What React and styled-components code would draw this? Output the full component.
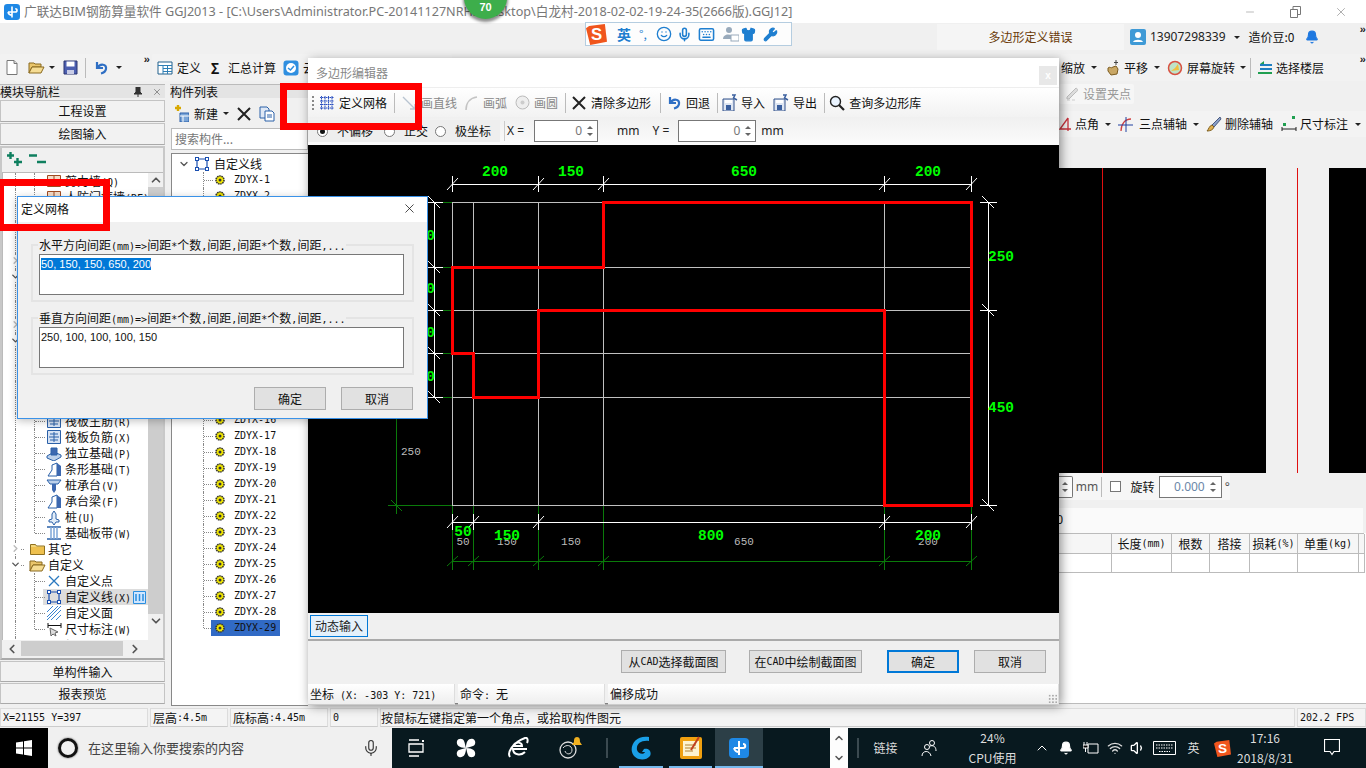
import React from 'react';
import styled, { createGlobalStyle, css } from 'styled-components';
import { Mic, Keyboard, Shirt, Wrench, Bell, X, Minus, ChevronUp, ChevronDown, ChevronLeft, ChevronRight, Volume1, Wifi, Smile } from 'lucide-react';

const Global = createGlobalStyle`
  html, body { margin: 0; padding: 0; background: #f0f0f0; }
  body { font: 12px/16px "Noto Sans CJK SC", "Liberation Sans", sans-serif; color: #111; }
  * { box-sizing: border-box; }
`;

const LatRun = styled.span`font: 10px/16px "DejaVu Sans Mono", "Liberation Mono", monospace;`;
function Mix({ children }) {
  return String(children).split(/([\x20-\x7e]+)/).map((p, i) =>
    /[\x20-\x7e]/.test(p) ? <LatRun key={i}>{p}</LatRun> : p);
}

/* ---------- icons ---------- */
const S = ({ w = 16, h = 16, children, vb }) => <svg width={w} height={h} viewBox={vb || `0 0 ${w} ${h}`} style={{ flex: 'none', display: 'block' }}>{children}</svg>;
const NewFile = () => <S w={12} h={15}><path d="M1 .5h7l3 3v11H1z" fill="#fff" stroke="#777"/><path d="M8 .5v3h3" fill="#ddd" stroke="#777"/></S>;
const OpenFolder = () => <S w={17} h={15} ><path d="M1 3h5l1 1h6v3H4L1 13z" fill="#e9c56b" stroke="#8a6a20"/><path d="M1 13l3-6h12l-3 6z" fill="#f5dc93" stroke="#8a6a20"/></S>;
const SaveIc = () => <S w={15} h={15}><path d="M1 1h13v13H1z" fill="#4c5fb0" stroke="#2a3470"/><path d="M3.500 1.500h8v5h-8z" fill="#fff"/><path d="M4 10h7v4H4z" fill="#c9cde6"/></S>;
const UndoIc = () => <S w={14} h={15}><path d="M3 2v6h6M3.500 8C6 3 13 4 12 9c-.5 2.500-3 4-5 4.500" fill="none" stroke="#2f6fc4" strokeWidth="2.200"/></S>;
const DefIc = () => <S><path d="M1 2h14v12H1z" fill="#fff" stroke="#22608c"/><path d="M1 5.500h14M6 5.500V14M10.500 5.500V14M6 8.500h9M6 11.500h9" stroke="#2f7fb5"/></S>;
const CloudIc = () => <S><rect x=".5" y=".5" width="15" height="15" rx="3" fill="#2f8fe0"/><circle cx="8" cy="8" r="5" fill="#fff"/><path d="M5 8l2.500 2L11 6" fill="none" stroke="#2f8fe0" strokeWidth="1.500"/></S>;
const Caret = styled.span`
  display: block; flex: none; width: 0; height: 0; margin-left: ${p => p.$ml ?? 0}px;
  border-left: 3px solid transparent; border-right: 3px solid transparent; border-top: 3px solid #222;
`;
const More = styled.span`font: bold 11px/11px "Liberation Mono", monospace; letter-spacing: -1px; color: #222;`;
const PlusIc = () => <S w={16} h={14}><path d="M3.500 0v7M0 3.500h7M10.500 6v8M7 10h8" stroke="#0f7f5f" strokeWidth="2.400"/></S>;
const MinusIc = () => <S w={17} h={14}><path d="M0 3.500h8M8 10h9" stroke="#0f7f5f" strokeWidth="2.400"/></S>;
const NewIc = () => <S w={14} h={17}><path d="M3 0v6M0 3h6" stroke="#d8a800" strokeWidth="2.400"/><path d="M5 8h9v9H5z" fill="#7aa5d8" stroke="#2a5fa8"/><path d="M5 11h9M8 11v6" stroke="#fff"/></S>;
const XIc = ({ c = '#222', s = 14 }) => <S w={s} h={s}><path d={`M1 1L${s - 1} ${s - 1}M${s - 1} 1L1 ${s - 1}`} stroke={c} strokeWidth="2"/></S>;
const CopyIc = () => <S><path d="M1 1h7l2 2v9H1z" fill="#dfe8f5" stroke="#2a60a8"/><path d="M6 5h7l2 2v8H6z" fill="#fff" stroke="#2a60a8"/><path d="M8 9h5M8 11h5" stroke="#2a60a8"/></S>;
const LineBox = ({ c = '#1a4fb0', w = 14 }) => <S w={w} h={w}><path d={`M2 2h${w - 4}v${w - 4}H2z`} fill="none" stroke={c} strokeWidth="1.200"/>{[[2, 2], [w - 2, 2], [2, w - 2], [w - 2, w - 2]].map(([x, y], i) => <rect key={i} x={x - 1.500} y={y - 1.500} width="3" height="3" fill="#fff" stroke={c}/>)}</S>;
const GearIc = () => <S w={10} h={10}><circle cx="5" cy="5" r="4" fill="#f4ea00" stroke="#333" strokeDasharray="1.500 .7" strokeWidth="1.600"/><circle cx="5" cy="5" r="1.500" fill="#333"/></S>;
const ClosedFolder = () => <S w={15} h={12}><path d="M.5 1.500h5l1 1.500h8v8.500H.5z" fill="#f3d67a" stroke="#8f7020"/><path d="M1 4h13v7H1z" fill="#eec04e"/></S>;
const BaseIc = ({ kind }) => {
  const b = '#2a60a8';
  if (kind === 'slab') return <S w={14} h={14}><path d="M.5.500h13v13H.5z" fill="#d7e3f4" stroke={b}/><path d="M7 2v10M2 7h10M3 4h8M3 10h8" stroke={b}/></S>;
  if (kind === 'iso') return <S w={16} h={15}><path d="M1 10l7-4 7 3v2l-7 4-7-3z" fill="#bcd0ea" stroke={b}/><path d="M5 2h6v7H5z" fill="#3c68b0" stroke={b}/></S>;
  if (kind === 'strip') return <S w={15} h={15}><path d="M1 14l4-6V3l5-2v13z" fill="#fff" stroke={b}/><path d="M10 1l4 3v10h-4z" fill="#3c68b0"/></S>;
  if (kind === 'cap') return <S w={16} h={15}><path d="M1 2h14l-3 4H4z" fill="#bcd0ea" stroke={b}/><path d="M6 6h4v6l-2 3-2-3z" fill="#3c68b0"/></S>;
  if (kind === 'pile') return <S w={12} h={15}><path d="M6 1l2 3v5l3 1v2H8l-2 3-2-3H1v-2l3-1V4z" fill="#e3edf8" stroke={b}/></S>;
  if (kind === 'band') return <S w={14} h={14}><path d="M0 1h14M0 13h14" stroke={b} strokeWidth="1.500"/><path d="M4 1v12M10 1v12M7 1v12" stroke="#7fa6d8" strokeWidth="1.500"/></S>;
  if (kind === 'point') return <S w={12} h={12}><path d="M1 1l10 10M11 1L1 11" stroke="#2a78c0" strokeWidth="1.300"/></S>;
  if (kind === 'area') return <S w={14} h={14}><path d="M0 6L6 0M0 11L11 0M0 14L14 0M4 14L14 4M9 14l5-5" stroke="#3a84d0"/></S>;
  if (kind === 'dim') return <S w={15} h={15}><path d="M1 1v5M14 1v5M1 3.500h13" stroke="#111"/><path d="M3 6l1 8 2-2 3 2-1-3 3-1z" fill="#ddd" stroke="#666"/></S>;
  if (kind === 'wall') return <S w={14} h={12}><path d="M.5.500h13v11H.5z" fill="#f4dcc8" stroke="#a04a20"/><path d="M0 6h14M7 0v6" stroke="#a04a20"/></S>;
  return null;
};
const GridIc = () => <S w={14} h={14}><path d="M1.500 0v14M5 0v14M8.500 0v14M12 0v14M0 1.500h14M0 5h14M0 8.500h14M0 12h14" stroke="#2a4fc0" strokeDasharray="1.500 .5"/></S>;
const LineIc = () => <S w={14} h={14}><path d="M1 1l12 12M13 8v5H8" fill="none" stroke="#b8c4d0" strokeWidth="1.400"/></S>;
const ArcIc = () => <S w={14} h={14}><path d="M2 14C2 7 6 2 13 1" fill="none" stroke="#c4c4c4" strokeWidth="1.600"/></S>;
const CircleIc = () => <S w={15} h={15}><circle cx="7.500" cy="7.500" r="6.500" fill="#eee" stroke="#bbb"/><circle cx="7.500" cy="7.500" r="2" fill="#ccc"/></S>;
const DiskIc = () => <S w={16} h={17}><path d="M1 5h11v12H1z" fill="#dfe6f2" stroke="#30508a"/><path d="M4 11h5v5H4z" fill="#3a5f9e"/><path d="M3 6h7v3H3z" fill="#fff"/><path d="M10 1h3l-1.500 3L15 6" fill="none" stroke="#3a5f9e" strokeWidth="1.500"/></S>;
const GlassIc = () => <S><circle cx="6.500" cy="6.500" r="5" fill="#eaf4ff" stroke="#222" strokeWidth="1.400"/><path d="M10 10l5 5" stroke="#222" strokeWidth="2.200"/></S>;
const PanIc = () => <S><path d="M3 8c2-2 3 1 5-1l3-1 2 3-1 5-6 1-3-4z" fill="#c9a765" stroke="#7c5c20"/><path d="M11 0v5M9 2.500h4" stroke="#444"/></S>;
const SpinIc = () => <S><circle cx="8" cy="8" r="6.500" fill="#bfe3c8" stroke="#d85040" strokeWidth="1.500"/><path d="M4 11l4-3 3-4 1 6z" fill="#f0c040"/></S>;
const FloorIc = () => <S><path d="M3 4h12v2H3zM3 8h12v2H3z" fill="#1f7fc0"/><path d="M1 12h14v2H1z" fill="#1f9f50"/><path d="M7 1L3 4h4z" fill="#1f9f50"/></S>;
const GripIc = () => <S w={14} h={14}><path d="M10 1c2 1 2 3 0 4L3 12H1v-2z" fill="#ddd" stroke="#bbb"/><path d="M1 13h3M6 13h3" stroke="#ccc"/></S>;
const AngleIc = () => <S w={13} h={14}><path d="M9 1L1 12h11M9 1v13" fill="none" stroke="#c8323c" strokeWidth="1.300"/></S>;
const ThreeIc = () => <S w={15} h={15}><path d="M3 14C3 7 7 2 13 2" fill="none" stroke="#d04040" strokeWidth="1.300"/><path d="M0 8h15M8 0v15" stroke="#2040a0"/></S>;
const BrushIc = () => <S><path d="M14 1L6 9l2 2 7-8z" fill="#8aa0c8" stroke="#4a5a80"/><path d="M6 9c-3 1-3 4-5 6 3 0 6-1 7-4z" fill="#e0b050" stroke="#806020"/></S>;
const DimIc = () => <S w={16} h={16}><path d="M1 11v4M15 11v4M1 13h14" stroke="#222"/><rect x="11" y="0" width="3" height="3" fill="#1f9f50"/><rect x="2" y="7" width="3" height="3" fill="#1f9f50"/></S>;
const AvatarIc = () => <S><rect width="16" height="16" rx="2" fill="#3f9ad6"/><circle cx="8" cy="6" r="3" fill="#fff"/><path d="M3 13c1-3 9-3 10 0z" fill="#fff"/></S>;
const GlodonIc = ({ s = 20 }) => <S w={s} h={s} vb="0 0 20 20"><rect width="20" height="20" rx="4" fill="#1e88e5"/><path d="M10 3v14M5 10h9c3 0 3-4 0-4M10 14c-4 0-5-4-5-4" fill="none" stroke="#fff" strokeWidth="2"/></S>;
const SogouIc = ({ s = 20 }) => <S w={s} h={s} vb="0 0 20 20"><path d="M3 2l15-2 2 17-16 3L0 4z" fill="#f0561d"/><text x="10" y="15.500" textAnchor="middle" fontFamily="Liberation Sans" fontWeight="bold" fontSize="16" fill="#fff">S</text></S>;
const WinIc = () => <S><path d="M0 2.500L7 1.500v6H0zM8 1.300L16 0v7.500H8zM0 8.500h7v6l-7-1zM8 8.500h8V16l-8-1.200z" fill="#fff"/></S>;
const TaskIc = () => <S w={16} h={18}><path d="M1 1h10M1 17h10M1 5h14v8H1z" fill="none" stroke="#fff" strokeWidth="1.300"/><path d="M14 1h2v2h-2z" fill="#fff"/></S>;
const FanIc = () => <S w={22} h={22}><path d="M11 11C4 11 1 8 2 4c1-3 6-3 7 0 1 2 1 4 2 7zM11 11c0-7 3-10 7-9 3 1 3 6 0 7-2 1-4 1-7 2zM11 11c7 0 10 3 9 7-1 3-6 3-7 0-1-2-1-4-2-7zM11 11c0 7-3 10-7 9-3-1-3-6 0-7 2-1 4-1 7-2z" fill="#fff"/></S>;
const IeIc = () => <S w={22} h={22}><path d="M20 12H6c0 6 8 7 12 3M6 9h9c0-4-6-5-9 0zM3 20C0 16 5 6 18 1c3-1 3 3 2 5" fill="none" stroke="#fff" strokeWidth="2"/></S>;
const SwirlIc = () => <S w={28} h={24}><circle cx="11" cy="14" r="8" fill="none" stroke="#ddd" strokeWidth="1.300"/><path d="M6 12c3-4 9-3 9 2s-6 5-7 1" fill="none" stroke="#ddd"/><path d="M20 1c-3 0-3 3-3 5l-2 3h10l-2-3c0-2 0-5-3-5z" fill="#f0b020"/></S>;
const GAppIc = () => <S w={24} h={26}><path d="M20 2C8 0 1 9 3 17c2 8 13 10 18 4 2-4-1-8-6-7l-2 3h3c-1 3-7 2-8-2C7 9 12 5 20 6z" fill="#1aa0e8"/></S>;
const NoteIc = () => <S w={24} h={24}><rect x="1" y="1" width="22" height="22" rx="2" fill="#f0a010"/><rect x="4" y="5" width="16" height="15" fill="#fdf3d0"/><path d="M6 9h11M6 12h11M6 15h8" stroke="#b08030"/><path d="M20 1l-8 13" stroke="#c04020" strokeWidth="2"/></S>;
const PeopleIc = () => <S w={16} h={18}><circle cx="11" cy="4" r="2.500" fill="none" stroke="#fff"/><circle cx="6" cy="8" r="2.500" fill="none" stroke="#fff"/><path d="M1 17c0-6 8-6 9 0M9 7c4-1 6 1 6 5" fill="none" stroke="#fff"/></S>;
const PlugIc = () => <S w={16} h={14}><path d="M5 3h10v9H5z" fill="none" stroke="#fff"/><path d="M1 1v3M4 1v3M0 4h5v3H0zM2.500 7v4" stroke="#fff"/></S>;
const NotifyIc = () => <S w={16} h={18}><path d="M.5.500h15v12H10l-2 3-2-3H.5z" fill="none" stroke="#fff" strokeWidth="1.200"/></S>;
const KbIc = () => <S w={23} h={14}><path d="M.5.500h22v13H.5z" fill="none" stroke="#fff"/><path d="M3 4h17M3 7h17M6 10.500h11" stroke="#fff" strokeDasharray="1.500 1"/></S>;
const AvatarSmall = () => <S w={17} h={16}><circle cx="7" cy="4" r="3" fill="#9ab"/><path d="M1 13c0-6 10-6 11 0z" fill="#9ab"/><rect x="9" y="9" width="8" height="6" fill="#fff" stroke="#9ab"/></S>;
const TinyCols = () => <S w={13} h={13}><path d="M.5.500h12v12H.5z" fill="#cfe6ff" stroke="#2a8fe0"/><path d="M3 3v7M6.500 3v7M10 3v7" stroke="#2a8fe0" strokeWidth="1.500"/></S>;
const RestoreIc = () => <S w={11} h={12}><path d="M.5 3.500h7v8h-7zM3 3.500v-3h7.500v8h-3" fill="none" stroke="#777"/></S>;

/* ---------- shell ---------- */
const Shell = styled.div`
  position: relative; width: 1366px; height: 768px; overflow: hidden;
  display: flex; flex-direction: column; background: #f0f0f0;
`;
const TitleBar = styled.div`
  height: 23px; background: #fff; display: flex; align-items: center; padding-left: 4px; gap: 4px; flex: none;
`;
const TitleText = styled.div`
  font: 12.650px/23px "Noto Sans", "Noto Sans CJK SC", sans-serif; color: #777; white-space: nowrap; flex: none; width: 1100px;
`;
const WinControls = styled.div`margin-left: auto; display: flex; width: 130px; justify-content: space-between; align-items: center; padding: 0 18px 0 8px; color: #777;`;

const TopRow = styled.div`height: 31px; flex: none; padding-top: 1px; display: flex; padding-left: 937px;`;
const ErrTab = styled.div`
  width: 187px; height: 26px; background: #f5f5f5; color: #6a3a08; display: flex; align-items: center; justify-content: center; font-size: 12px;
`;
const UserBar = styled.div`flex: 1; height: 26px; display: flex; align-items: center; padding-left: 6px; background: #f0f0f0; position: relative;`;
const UserName = styled.span`font: 12px/16px "Noto Sans", sans-serif; margin: 0 8px 0 4px; color: #222;`;
const CostText = styled.span`margin: 0 10px 0 9px;`;
const MoreCorner = styled(More)`position: absolute; right: 1px; top: 1px;`;

const ToolRow = styled.div`height: 30px; flex: none; display: flex;`;
const BarGroup = styled.div`
  height: 27px; display: flex; align-items: center; background: #f2f2f2; border-radius: 2px;
  width: ${p => p.$w}px; padding-left: ${p => p.$pl ?? 0}px; margin-left: ${p => p.$ml ?? 0}px;
  position: relative; flex: none;
`;
const Tool = styled.div`
  display: flex; align-items: center; flex: none; gap: ${p => p.$g ?? 4}px; color: ${p => p.$dim ? '#888' : '#111'};
  margin-left: ${p => p.$ml ?? 0}px; white-space: nowrap;
`;
const Sigma = styled.b`font-size: 14px; width: 10px; text-align: center;`;
const Sep = styled.span`flex: none; width: 1px; height: 20px; background: #bbb; margin-left: ${p => p.$ml ?? 0}px;`;

/* ---------- body columns ---------- */
const Body = styled.div`flex: 1; display: flex; min-height: 0;`;
const NavPanel = styled.div`width: 165px; flex: none; display: flex; flex-direction: column; gap: 1px;`;
const PaneHead = styled.div`
  height: 14px; display: flex; align-items: center; line-height: 14px; justify-content: space-between; padding-right: 3px; margin-bottom: 1px;
  background: #e4e4e4; border-top: 1px solid #bbb; color: #111; flex: none; overflow: visible;
`;
const HeadIcons = styled.span`display: flex; gap: 10px; align-items: center;`;
const NavBtn = styled.div`
  height: ${p => p.$h}px; flex: none; border: 1px solid #c4c4c4; border-bottom-color: #aaa; background: #f2f2f2; display: flex; align-items: center; justify-content: center;
`;
const NavFrame = styled.div`
  height: 514px; flex: none; border: 2px solid #c8c8c8; border-bottom-color: #aaa; display: flex; flex-direction: column; background: #f0f0f0;
`;
const ExpandRow = styled.div`height: 24px; flex: none; display: flex; gap: 6px; padding: 4px 3px 0 5px;`;
const TreeWrap = styled.div`height: 468px; flex: none; position: relative; display: flex; border: 1px solid #bbb; border-bottom: none; border-right: none;`;
const TreeList = styled.div`flex: 1; background: #fff; overflow: hidden; position: relative;`;
const VScroll = styled.div`width: 15px; flex: none; background: #f0f0f0; display: flex; flex-direction: column; align-items: center; color: #555; position: relative;`;
const VThumb = styled.div`width: 15px; height: 427px; flex: none; background: #cdcdcd;`;
const HScroll = styled.div`height: 15px; margin-top: 1px; flex: none; display: flex; align-items: center; background: #f0f0f0; color: #555; padding-left: 3px;`;
const HThumb = styled.div`width: 102px; height: 15px; background: #cdcdcd; margin: 0 5px 0 2px;`;

const NavRowBox = styled.div`
  height: 16px; position: relative; display: flex; align-items: center; white-space: nowrap; padding-left: ${p => p.$folder ? 25 : 42}px;
  &::before { content: ''; position: absolute; left: 12px; top: 0; bottom: 0; border-left: 1px dotted #888; }
  ${p => !p.$folder && css`&::after { content: ''; position: absolute; left: 31px; top: 0; bottom: ${p.$last ? 8 : 0}px; border-left: 1px dotted #888; }`}
`;
const RowConn = styled.span`position: absolute; left: ${p => p.$l}px; width: ${p => p.$w}px; top: 8px; border-top: 1px dotted #888;`;
const Chevron = styled.span`position: absolute; left: 7px; top: 2px; color: ${p => p.$open ? '#555' : '#bbb'}; background: #fff; display: flex; z-index: 1;`;
const NavIcon = styled.span`width: 18px; flex: none; display: flex; justify-content: center; z-index: 1;`;
const NavLabel = styled.span`margin-left: 2px; height: 16px; z-index: 1;`;
const SelBg = styled.span`position: absolute; left: 40px; right: 0; top: 0; bottom: 0; background: #ddd;`;
const Extra = styled.span`z-index: 1; margin-left: 2px; display: flex;`;

const ListPanel = styled.div`width: 138px; margin-left: 5px; flex: none; display: flex; flex-direction: column;`;
const ListTools = styled.div`height: 29px; flex: none; display: flex; align-items: center; padding-left: 5px;`;
const SearchBox = styled.div`height: 22px; flex: none; border: 1px solid #bbb; background: #fff; color: #777; padding: 2px 3px; margin-left: 1px; margin-bottom: 3px;`;
const CompTree = styled.div`flex: 1; margin-left: 1px; margin-bottom: 1px; border: 1px solid #888; border-right: none; background: #fff; padding-top: 2px; position: relative; overflow: hidden;`;
const CompRoot = styled.div`height: 16px; display: flex; align-items: center; padding-left: 6px; gap: 5px;`;
const CompRow = styled.div`
  height: 16px; display: flex; align-items: center; position: relative; padding-left: 43px;
  &::before { content: ''; position: absolute; left: 31px; top: 0; bottom: ${p => p.$last ? 8 : 0}px; border-left: 1px dotted #888; }
  &::after { content: ''; position: absolute; left: 32px; width: 9px; top: 8px; border-top: 1px dotted #888; }
`;
const CompLabel = styled.span`
  display: flex; align-items: center; height: 16px; gap: 9px; width: 69px; margin-left: -4px; padding-left: 4px;
  background: ${p => p.$sel ? '#316ac5' : 'transparent'}; z-index: 1;
`;

/* ---------- work area (behind the polygon window) ---------- */
const Work = styled.div`flex: 1; display: flex; flex-direction: column; min-width: 0;`;
const WorkRow = styled.div`flex: none; padding-left: 751px; display: flex; align-items: center; height: ${p => p.$h}px;`;
const GripTab = styled.div`height: 20px; width: 75px; background: #f6f6f6; border-radius: 2px; display: flex; align-items: center; padding-left: 7px; gap: 3px; color: #999; margin-bottom: 7px;`;
const SnapBar = styled.div`height: 26px; width: 307px; background: #f3f3f3; display: flex; align-items: center;`;
const Viewport = styled.div`height: 305px; flex: none; display: grid; grid-template-columns: 958px 63px 1fr;`;
const Pane = styled.div`background: ${p => p.$light ? '#f0f0f0' : '#000'}; display: flex;`;
const Guide = styled.div`width: 1px; background: #e01010; margin-left: ${p => p.$ml}px;`;
const PropBar = styled.div`flex: none; height: 35px; padding-left: 751px; display: flex; align-items: flex-start;`;
const PropInner = styled.div`width: 171px; height: 27px; background: #f6f6f6; display: flex; align-items: center; color: #111;`;
const SpinTail = styled.div`width: 15px; height: 22px; border: 1px solid #777; border-left: none; border-radius: 0 2px 2px 0; background: #fff; display: flex; flex-direction: column; align-items: center; justify-content: center; gap: 4px;`;
const Up = styled.span`width: 0; height: 0; border-left: 3px solid transparent; border-right: 3px solid transparent; border-bottom: 3px solid #666;`;
const Dn = styled.span`width: 0; height: 0; border-left: 3px solid transparent; border-right: 3px solid transparent; border-top: 3px solid #666;`;
const PropUnit = styled.span`font: 12px/16px "Noto Sans", sans-serif; color: #555;`;
const CheckBox = styled.span`width: 11px; height: 11px; border: 1px solid #777; background: #fff; margin-left: 8px; flex: none;`;
const DegSpin = styled.div`
  width: 68px; height: 22px; border: 1px solid #777; background: #fff; margin-left: 5px; display: flex; align-items: center; justify-content: flex-end;
  font: 12px/16px "Noto Sans", sans-serif; color: #6b87a8; gap: 5px; padding-right: 5px;
`;
const MiniSpin = styled.span`display: flex; flex-direction: column; gap: 4px; align-items: center;`;
const InfoRow = styled.div`height: 25px; line-height: 23px; flex: none; margin-left: 751px; width: 304px; background: #fafafa;`;
const InfoText = styled.span`display: block; margin-left: -4px; width: 8px; overflow: hidden; font: 12px/23px "Noto Sans", sans-serif; text-align: right;`;
const DataBlock = styled.div`flex: 1; background: #fff; border-bottom: 1px solid #bbb; margin-bottom: 3px;`;
const Table = styled.div`
  display: grid; grid-template-columns: 803px 60px 38px 40px 48px 61px 6px; grid-template-rows: 20px 19px; width: 1056px;
  border: 1px solid #bbb; border-bottom: none;
`;
const Th = styled.div`
  border-right: 1px solid #bbb; border-bottom: 1px solid #bbb; background: #f6f6f6; display: flex; align-items: center; justify-content: center; white-space: nowrap;
`;
const Td = styled.div`border-right: 1px solid #bbb; border-bottom: 1px solid #bbb; background: #fff;`;

/* ---------- status + taskbar ---------- */
const StatusBar = styled.div`height: 21px; flex: none; display: flex; gap: 2px; padding-top: 1px;`;
const StatusCell = styled.div`
  width: ${p => p.$w ? `${p.$w}px` : 'auto'}; flex: ${p => p.$w ? 'none' : 1}; height: 19px; background: #f4f4f4; border: 1px solid #dcdcdc; border-bottom-color: #ccc;
  padding-left: ${p => p.$pad ?? 2}px; display: flex; align-items: center; white-space: nowrap; overflow: hidden;
`;
const Taskbar = styled.div`height: 40px; flex: none; display: flex; background: #08191f; color: #fff;`;
const StartBtn = styled.div`width: 48px; background: #000; display: flex; align-items: center; justify-content: center;`;
const SearchBar = styled.div`width: 344px; background: #f0f0f0; color: #444; display: flex; align-items: center; padding-left: 10px; gap: 10px; font-size: 13px; position: relative;`;
const Cortana = styled.span`width: 20px; height: 20px; border-radius: 50%; border: 3px solid #111; flex: none; box-shadow: 0 0 2px #555;`;
const SearchMic = styled.span`margin-left: auto; margin-right: 12px; color: #333; display: flex;`;
const Slot = styled.div`
  width: ${p => p.$w}px; flex: none; display: flex; align-items: center; justify-content: center; position: relative; padding-left: ${p => p.$pl ?? 0}px;
  background: ${p => p.$active ? '#2c3f47' : 'transparent'}; color: #ddd;
  ${p => p.$under && css`&::after { content: ''; position: absolute; left: ${p.$active ? 0 : 3}px; right: ${p.$active ? 0 : 3}px; bottom: 0; height: 2px; background: #76b9ed; }`}
`;
const TaskDivider = styled.span`width: 2px; height: 20px; background: #3b4a50;`;
const ScrollBox = styled.div`width: 18px; margin-left: 67px; background: #fdfdfd; color: #555; display: flex; flex-direction: column; align-items: center; justify-content: space-around;`;
const CpuBlock = styled.div`display: flex; flex-direction: column; align-items: center; line-height: 20px; font-size: 12px;`;

/* ---------- polygon editor window ---------- */
const PolyWin = styled.div`
  position: absolute; z-index: 5; left: 308px; top: 58px; width: 751px; height: 645px; background: #f0f0f0;
  box-shadow: 2px 3px 10px rgba(0,0,0,.45); display: flex; flex-direction: column;
`;
const PolyTitle = styled.div`height: 30px; flex: none; background: #fff; color: #888; padding: 7px 8px; position: relative; line-height: 16px; border-bottom: 1px solid #eee;`;
const PolyClose = styled.div`position: absolute; right: 2px; top: 8px; width: 18px; height: 19px; background: #e8e8e8; color: #fff; text-align: center; font: bold 10px/19px "Liberation Sans", sans-serif;`;
const PolyTools = styled.div`height: 29px; flex: none; background: linear-gradient(#fff, #f2f2f2); display: flex; align-items: center; padding-left: 4px;`;
const Dots = styled.span`width: 2px; height: 14px; flex: none; background: repeating-linear-gradient(#888 0 2px, transparent 2px 4px);`;
const OptRow = styled.div`height: 28px; flex: none; background: linear-gradient(#f0f0f0, #fbfbfb); display: flex; align-items: center; font: 12px/16px "Noto Sans", sans-serif;`;
const RadioGroup = styled.div`width: 192px; height: 22px; flex: none; background: #eee; display: flex; align-items: center; padding-left: 9px; font: 12px/16px "Noto Sans CJK SC", sans-serif;`;
const Radio = styled.span`
  width: 11px; height: 11px; flex: none; border-radius: 50%; border: 1px solid #777; background: #fff; margin-right: 9px; margin-left: ${p => p.$ml ?? 0}px; position: relative;
  ${p => p.$on && css`&::after { content: ''; position: absolute; left: 2px; top: 2px; width: 5px; height: 5px; border-radius: 50%; background: #111; }`}
`;
const OptLabel = styled.span`margin-left: ${p => p.$ml ?? 0}px; color: #222; white-space: nowrap;`;
const OptSep = styled.span`width: 1px; height: 20px; background: #ccc; margin-left: 4px;`;
const SpinBox = styled.div`
  width: ${p => p.$w}px; height: 22px; flex: none; margin-left: ${p => p.$ml}px; border: 1px solid #777; background: #fff; color: #777;
  display: flex; align-items: center; justify-content: flex-end; gap: 5px; padding-right: 4px;
`;
const CanvasBox = styled.div`height: 468px; flex: none; background: #000; display: block; overflow: hidden;`;
const Drawing = styled.svg`display: block; width: 751px; height: 468px;`;
const DynRow = styled.div`height: 28px; flex: none; padding: 2px; border-bottom: 2px solid #aaa;`;
const DynBtn = styled.div`width: 58px; height: 22px; border: 1px solid #0078d7; background: #e5f1fb; display: flex; align-items: center; justify-content: center; color: #222;`;
const ActionRow = styled.div`height: 42px; flex: none; display: flex; align-items: flex-start; padding-top: 9px;`;
const WinBtn = styled.div`
  height: 23px; width: ${p => p.$w}px; margin-left: ${p => p.$ml}px; flex: none; background: #e1e1e1; display: flex; align-items: center; justify-content: center; white-space: nowrap;
  border: ${p => p.$focus ? '2px solid #0078d7' : '1px solid #adadad'};
`;
const PolyStatus = styled.div`height: 21px; margin-top: 1px; flex: none; display: flex; gap: 3px; position: relative;`;
const PolyCell = styled.div`
  width: ${p => p.$w ? `${p.$w}px` : 'auto'}; flex: ${p => p.$w ? 'none' : 1}; background: linear-gradient(#fff, #eee); border-bottom: 1px solid #ccc; border-right: 1px solid #ddd; padding: 2px 2px; white-space: nowrap;
`;
const ResizeGrip = styled.span`position: absolute; right: 1px; bottom: 1px; width: 10px; height: 10px; background: radial-gradient(#aaa 1px, transparent 1.200px) 0 0/3.300px 3.300px;`;

/* ---------- grid dialog ---------- */
const GridDlg = styled.div`
  position: absolute; z-index: 6; left: 17px; top: 196px; width: 411px; height: 223px; background: #f0f0f0; border: 1px solid #3a92e8;
  display: flex; flex-direction: column; box-shadow: 0 2px 8px rgba(0,0,0,.25);
`;
const DlgTitle = styled.div`height: 25px; flex: none; background: #fff; display: flex; justify-content: space-between; align-items: center; padding: 0 10px 2px 3px; font-size: 12px;`;
const DlgBody = styled.div`flex: 1; padding: 16px 13px 0 13px; display: flex; flex-direction: column; gap: 9px;`;
const Group = styled.fieldset`
  margin: 0; padding: 2px 8px 5px 6px; border: 2px solid #e4e4e4; min-width: 0; height: 64px; flex: none;
`;
const Legend = styled.legend`padding: 0 1px; margin-left: -1px; height: 14px; line-height: 14px; white-space: nowrap;`;
const Area = styled.div`height: 41px; border: 1px solid #777; background: #fff; padding: 1px 1px; font: 11px/16px "Liberation Sans", sans-serif;`;
const Selected = styled.span`background: #0078d7; color: #fff;`;
const DlgActions = styled.div`display: flex; justify-content: flex-end; gap: 15px; padding-right: 1px; margin-top: 3px;`;

/* ---------- overlays ---------- */
const RedFrame = styled.div`
  position: absolute; z-index: 7; left: ${p => p.$x}px; top: ${p => p.$y}px; width: ${p => p.$w}px; height: ${p => p.$h}px; border: 7px solid #ff0000; pointer-events: none;
`;
const Badge = styled.div`
  position: absolute; z-index: 8; left: 464px; top: -24px; width: 43px; height: 43px; border-radius: 50%; background: #3dae4b; color: #fff; box-shadow: 0 2px 3px 1px rgba(0,0,0,.45);
  display: flex; align-items: flex-end; justify-content: center; padding-bottom: 5px; font: bold 11px/14px "Liberation Sans", sans-serif;
`;
const ImeBar = styled.div`
  position: absolute; z-index: 8; left: 585px; top: 22px; width: 207px; height: 24px; background: #fdfdfd; border: 1px solid #b5cde0; display: flex; align-items: center; color: #1f7fd0;
`;
const ImeZh = styled.span`font-weight: bold; font-size: 14px; margin-left: 10px;`;
const ImeGap = styled.span`display: flex; margin-left: ${p => p.$ml}px; color: ${p => p.$c || 'inherit'};`;

const navRows = [
  { t: '剪力墙(Q)', k: 'wall' }, { t: '人防门框墙(RF)', k: 'wall' }, { t: '砌体墙(Q)', k: 'wall' }, { t: '暗梁(A)', k: 'wall' }, { t: '砌体加筋(Y)', k: 'wall' },
  { t: '门窗洞', f: 1 }, { t: '梁', f: 1, open: 1 }, { t: '梁(L)', k: 'band' }, { t: '圈梁(E)', k: 'band', last: 1 },
  { t: '板', f: 1 }, { t: '基础', f: 1, open: 1 },
  { t: '基础梁(F)', k: 'band' }, { t: '筏板基础(M)', k: 'slab' }, { t: '集水坑(K)', k: 'slab' }, { t: '柱墩(Y)', k: 'slab' },
  { t: '筏板主筋(R)', k: 'slab' }, { t: '筏板负筋(X)', k: 'slab' }, { t: '独立基础(P)', k: 'iso' }, { t: '条形基础(T)', k: 'strip' },
  { t: '桩承台(V)', k: 'cap' }, { t: '承台梁(F)', k: 'strip' }, { t: '桩(U)', k: 'pile' }, { t: '基础板带(W)', k: 'band', last: 1 },
  { t: '其它', f: 1 }, { t: '自定义', f: 1, open: 1 },
  { t: '自定义点', k: 'point' }, { t: '自定义线(X)', k: 'line', sel: 1 }, { t: '自定义面', k: 'area' }, { t: '尺寸标注(W)', k: 'dim', last: 1 },
  { t: 'CAD识图', f: 1 },
];

function NavRow({ r }) {
  return (
    <NavRowBox $folder={r.f} $last={r.last}>
      {r.sel && <SelBg/>}
      {r.f ? (
        <>
          <Chevron $open={r.open}>{r.open ? <ChevronDown size={11} strokeWidth={3}/> : <ChevronRight size={11} strokeWidth={3}/>}</Chevron>
          <RowConn $l={13} $w={8}/>
          <NavIcon>{r.open ? <OpenFolder/> : <ClosedFolder/>}</NavIcon>
        </>
      ) : (
        <>
          <RowConn $l={32} $w={10}/>
          <NavIcon>{r.k === 'line' ? <LineBox w={14}/> : <BaseIc kind={r.k}/>}</NavIcon>
        </>
      )}
      <NavLabel><Mix>{r.t}</Mix></NavLabel>
      {r.sel && <Extra><TinyCols/></Extra>}
    </NavRowBox>
  );
}

const W = '#fff', G = '#0a7a0a', L = '#c0c0c0', R = '#ff0000', T = '#00ff00';
const gx = [452, 473, 538, 603, 884, 971];
const gy = [202, 267, 310, 353, 397, 505];
const lines = (arr, stroke) => arr.map(([x1, y1, x2, y2], i) => <line key={stroke + i + x1 + y1} x1={x1} y1={y1} x2={x2} y2={y2} stroke={stroke} strokeWidth="1"/>);
const vTick = (x, y, c) => [[x + .5, y - 8, x + .5, y + 8], [x - 5, y + 6, x + 6, y - 6]].map((l, i) => <line key={`${x}${y}${i}`} x1={l[0]} y1={l[1]} x2={l[2]} y2={l[3]} stroke={c}/>);
const hTick = (x, y, c) => [[x - 8, y + .5, x + 9, y + .5], [x - 6, y - 6, x + 6, y + 6]].map((l, i) => <line key={`${x}${y}h${i}`} x1={l[0]} y1={l[1]} x2={l[2]} y2={l[3]} stroke={c}/>);
const GreenT = ({ x, y, children, anchor = 'middle' }) => <text x={x} y={y} textAnchor={anchor} fontFamily="Liberation Mono" fontWeight="bold" fontSize="14.500" fill={T}>{children}</text>;
const GrayT = ({ x, y, children, anchor = 'middle' }) => <text x={x} y={y} textAnchor={anchor} fontFamily="Liberation Mono" fontSize="11" fill="#bbb">{children}</text>;

function PolyDrawing() {
  return (
    <Drawing viewBox="308 145 751 468">
      {lines(gx.slice(0, 4).map(x => [x + .5, 202, x + .5, 505]), L)}
      {lines([[884.5, 202, 884.5, 310]], L)}
      {lines(gy.map(y => [452, y + .5, 971, y + .5]), L)}
      {lines(gy.slice(0, 5).map(y => [443, y + .5, 452, y + .5]), G)}
      {lines([[388, 505.5, 452, 505.5], [396.5, 205, 396.5, 514], [452, 561.5, 971, 561.5]], G)}
      {lines(gx.map(x => [x + .5, 506, x + .5, 570]), G)}
      {gx.map(x => <line key={x} x1={x - 5} y1={566} x2={x + 6} y2={556} stroke={G}/>)}
      <line x1="391" y1="500" x2="402" y2="511" stroke={G}/>

      <polygon points="603.500,202.500 971.500,202.500 971.500,505.500 884.500,505.500 884.500,310.500 538.500,310.500 538.500,397.500 473.500,397.500 473.500,353.500 452.500,353.500 452.500,267.500 603.500,267.500" fill="none" stroke={R} strokeWidth="3" strokeLinejoin="miter"/>

      {lines([[452, 184.5, 971, 184.5], [452, 522.5, 971, 522.5], [988.5, 202, 988.5, 505], [434.5, 202, 434.5, 397]], W)}
      {[452, 538, 603, 884, 971].map(x => vTick(x, 184, W))}
      {[452, 473, 538, 884, 971].map(x => vTick(x, 522, W))}
      {[202, 310, 505].map(y => hTick(988, y, W))}
      {gy.slice(0, 5).map(y => hTick(434, y, W))}

      <GreenT x={495} y={176}>200</GreenT>
      <GreenT x={571} y={176}>150</GreenT>
      <GreenT x={744} y={176}>650</GreenT>
      <GreenT x={928} y={176}>200</GreenT>
      <GreenT x={1001} y={261}>250</GreenT>
      <GreenT x={1001} y={412}>450</GreenT>
      <GreenT x={435} y={240} anchor="end">150</GreenT>
      <GreenT x={435} y={293} anchor="end">100</GreenT>
      <GreenT x={435} y={337} anchor="end">100</GreenT>
      <GreenT x={435} y={381} anchor="end">100</GreenT>

      <GrayT x={463} y={545}>50</GrayT>
      <GrayT x={507} y={545}>150</GrayT>
      <GrayT x={571} y={545}>150</GrayT>
      <GrayT x={744} y={545}>650</GrayT>
      <GrayT x={928} y={545}>200</GrayT>
      <GrayT x={401} y={455} anchor="start">250</GrayT>

      <GreenT x={463} y={536}>50</GreenT>
      <GreenT x={507} y={540}>150</GreenT>
      <GreenT x={711} y={540}>800</GreenT>
      <GreenT x={928} y={540}>200</GreenT>
    </Drawing>
  );
}

const zdyx = Array.from({ length: 29 }, (_, i) => i + 1);
const headers = ['长度(mm)', '根数', '搭接', '损耗(%)', '单重(kg)'];

export default function App() {
  return (
    <Shell>
      <Global/>
      <TitleBar>
        <GlodonIc s={16}/>
        <TitleText>广联达BIM钢筋算量软件 GGJ2013 - [C:\Users\Administrator.PC-20141127NRHI\Desktop\白龙村-2018-02-02-19-24-35(2666版).GGJ12]</TitleText>
        <WinControls><Minus size={12} strokeWidth={1}/><RestoreIc/><X size={14} strokeWidth={1}/></WinControls>
      </TitleBar>

      <TopRow>
        <ErrTab>多边形定义错误</ErrTab>
        <UserBar>
          <AvatarIc/>
          <UserName>13907298339</UserName><Caret/>
          <CostText>造价豆:0</CostText>
          <Bell size={14} fill="#1e78e0" color="#1e78e0"/>
          <MoreCorner>»</MoreCorner>
        </UserBar>
      </TopRow>

      <ToolRow>
        <BarGroup $w={150} $pl={6}>
          <NewFile/><Tool $ml={10} $g={4}><OpenFolder/><Caret/></Tool>
          <Tool $ml={8}><SaveIc/></Tool><Sep $ml={7}/>
          <Tool $ml={8} $g={8}><UndoIc/><Caret/></Tool>
          <MoreCorner>»</MoreCorner>
        </BarGroup>
        <BarGroup $w={300} $pl={5} $ml={2}>
          <Tool><DefIc/>定义</Tool>
          <Tool $ml={9} $g={8}><Sigma>Σ</Sigma>汇总计算</Tool>
          <Tool $ml={7}><CloudIc/>云</Tool>
        </BarGroup>
        <BarGroup $ml={609} $w={305}>
          <Tool>缩放</Tool><Caret $ml={6}/>
          <Tool $ml={8} $g={3}><PanIc/>平移</Tool><Caret $ml={6}/>
          <Tool $ml={7} $g={4}><SpinIc/>屏幕旋转</Tool><Caret $ml={5}/>
          <Sep $ml={4}/>
          <Tool $ml={6} $g={3}><FloorIc/>选择楼层</Tool>
          <MoreCorner>»</MoreCorner>
        </BarGroup>
      </ToolRow>

      <Body>
        <NavPanel>
          <PaneHead>模块导航栏<HeadIcons><S w={8} h={10}><path d="M2 0h4v5l2 2H0l2-2zM4 7v3" fill="#333" stroke="#333"/></S><X size={10} strokeWidth={1}/></HeadIcons></PaneHead>
          <NavBtn $h={22}>工程设置</NavBtn>
          <NavBtn $h={22}>绘图输入</NavBtn>
          <NavFrame>
            <ExpandRow><PlusIc/><MinusIc/></ExpandRow>
            <TreeWrap>
              <TreeList>{navRows.map((r, i) => <NavRow key={r.t + i} r={r}/>)}</TreeList>
              <VScroll>
                <ChevronUp size={14} strokeWidth={3}/>
                <VThumb/>
                <ChevronDown size={14} strokeWidth={3}/>
              </VScroll>
            </TreeWrap>
            <HScroll>
              <ChevronLeft size={14} strokeWidth={3}/><HThumb/><ChevronRight size={14} strokeWidth={3}/>
            </HScroll>
          </NavFrame>
          <NavBtn $h={21}>单构件输入</NavBtn>
          <NavBtn $h={21}>报表预览</NavBtn>
        </NavPanel>

        <ListPanel>
          <PaneHead>构件列表</PaneHead>
          <ListTools>
            <NewIc/><Tool $ml={5} $g={5}>新建<Caret/></Tool>
            <Tool $ml={8}><XIc/></Tool>
            <Tool $ml={8}><CopyIc/></Tool>
          </ListTools>
          <SearchBox>搜索构件...</SearchBox>
          <CompTree>
            <CompRoot><ChevronDown size={12} color="#555" strokeWidth={2.500}/><LineBox w={14}/><span>自定义线</span></CompRoot>
            {zdyx.map(n => (
              <CompRow key={n} $last={n === 29}>
                <CompLabel $sel={n === 29}><GearIc/><LatRun>ZDYX-{n}</LatRun></CompLabel>
              </CompRow>
            ))}
          </CompTree>
        </ListPanel>

        <Work>
          <WorkRow $h={27}>
            <GripTab><GripIc/>设置夹点</GripTab>
          </WorkRow>
          <WorkRow $h={26}>
            <SnapBar>
              <AngleIc/><Tool $ml={3}>点角</Tool><Caret $ml={6}/>
              <Tool $ml={7} $g={6}><ThreeIc/>三点辅轴</Tool><Caret $ml={6}/>
              <Tool $ml={7} $g={3}><BrushIc/>删除辅轴</Tool>
              <Tool $ml={8} $g={3}><DimIc/>尺寸标注</Tool><Caret $ml={7}/>
            </SnapBar>
          </WorkRow>
          <WorkRow $h={31}/>
          <Viewport>
            <Pane><Guide $ml={794}/></Pane>
            <Pane $light><Guide $ml={31}/></Pane>
            <Pane/>
          </Viewport>
          <PropBar>
            <PropInner>
              <SpinTail><Up/><Dn/></SpinTail>
              <PropUnit>&nbsp;mm&nbsp;</PropUnit>
              <Sep/>
              <CheckBox/>
              <Tool $ml={9}>旋转</Tool>
              <DegSpin>0.000<MiniSpin><Up/><Dn/></MiniSpin></DegSpin>
              <PropUnit>&nbsp;°</PropUnit>
            </PropInner>
          </PropBar>
          <InfoRow><InfoText>0</InfoText></InfoRow>
          <DataBlock>
            <Table>
              <Th/>{headers.map(h => <Th key={h}><Mix>{h}</Mix></Th>)}<Th/>
              <Td/><Td/><Td/><Td/><Td/><Td/><Td/>
            </Table>
          </DataBlock>
        </Work>
      </Body>

      <StatusBar>
        <StatusCell $w={148}><LatRun>X=21155 Y=397</LatRun></StatusCell>
        <StatusCell $w={78}><Mix>层高:4.5m</Mix></StatusCell>
        <StatusCell $w={98}><Mix>底标高:4.45m</Mix></StatusCell>
        <StatusCell $w={48}><LatRun>0</LatRun></StatusCell>
        <StatusCell $pad={0}>按鼠标左键指定第一个角点，或拾取构件图元</StatusCell>
        <StatusCell $w={69}><LatRun>202.2 FPS</LatRun></StatusCell>
      </StatusBar>

      <Taskbar>
        <StartBtn><WinIc/></StartBtn>
        <SearchBar><Cortana/>在这里输入你要搜索的内容<SearchMic><Mic size={18} strokeWidth={1.500}/></SearchMic></SearchBar>
        <Slot $w={48}><TaskIc/></Slot>
        <Slot $w={52}><FanIc/></Slot>
        <Slot $w={52}><IeIc/></Slot>
        <Slot $w={54}><SwirlIc/></Slot>
        <Slot $w={18}><TaskDivider/></Slot>
        <Slot $w={50} $under><GAppIc/></Slot>
        <Slot $w={49} $under><NoteIc/></Slot>
        <Slot $w={48} $under $active><GlodonIc/></Slot>
        <ScrollBox><ChevronUp size={12} strokeWidth={3}/><ChevronDown size={12} strokeWidth={3}/></ScrollBox>
        <Slot $w={20}><TaskDivider/></Slot>
        <Slot $w={35}>链接</Slot>
        <Slot $w={52}><PeopleIc/></Slot>
        <Slot $w={75}><CpuBlock><span>24%</span><span>CPU使用</span></CpuBlock></Slot>
        <Slot $w={23}><ChevronUp size={16} strokeWidth={1.500} color="#fff"/></Slot>
        <Slot $w={25}><Bell size={14} fill="#fff" color="#fff"/></Slot>
        <Slot $w={25}><PlugIc/></Slot>
        <Slot $w={24}><Wifi size={16} color="#ddd"/></Slot>
        <Slot $w={21}><Volume1 size={16} color="#fff"/></Slot>
        <Slot $w={33}><KbIc/></Slot>
        <Slot $w={25}>英</Slot>
        <Slot $w={32}><SogouIc s={17}/></Slot>
        <Slot $w={54}><CpuBlock><span>17:16</span><span>2018/8/31</span></CpuBlock></Slot>
        <Slot $w={74} $pl={6}><NotifyIc/></Slot>
      </Taskbar>

      <PolyWin>
        <PolyTitle>多边形编辑器<PolyClose>x</PolyClose></PolyTitle>
        <PolyTools>
          <Dots/>
          <Tool $ml={6} $g={5}><GridIc/>定义网格</Tool><Sep $ml={7}/>
          <Tool $ml={7} $g={5} $dim><LineIc/>画直线</Tool>
          <Tool $ml={7} $g={5} $dim><ArcIc/>画弧</Tool>
          <Tool $ml={8} $g={4} $dim><CircleIc/>画圆</Tool><Sep $ml={7}/>
          <Tool $ml={6} $g={5}><XIc s={14}/>清除多边形</Tool><Sep $ml={9}/>
          <Tool $ml={6} $g={5}><UndoIc/>回退</Tool><Sep $ml={7}/>
          <Tool $ml={4} $g={3}><DiskIc/>导入</Tool>
          <Tool $ml={8} $g={4}><DiskIc/>导出</Tool><Sep $ml={7}/>
          <Tool $ml={4} $g={4}><GlassIc/>查询多边形库</Tool>
        </PolyTools>
        <OptRow>
          <RadioGroup>
            <Radio $on/>不偏移
            <Radio $ml={11}/>正交
            <Radio $ml={7}/>极坐标
          </RadioGroup>
          <OptSep/>
          <OptLabel $ml={2}>X =</OptLabel>
          <SpinBox $w={64} $ml={10}>0<MiniSpin><Up/><Dn/></MiniSpin></SpinBox>
          <OptLabel $ml={19}>mm</OptLabel>
          <OptLabel $ml={13}>Y =</OptLabel>
          <SpinBox $w={78} $ml={9}>0<MiniSpin><Up/><Dn/></MiniSpin></SpinBox>
          <OptLabel $ml={5}>mm</OptLabel>
        </OptRow>
        <CanvasBox><PolyDrawing/></CanvasBox>
        <DynRow><DynBtn>动态输入</DynBtn></DynRow>
        <ActionRow>
          <WinBtn $w={105} $ml={313}><Mix>从CAD选择截面图</Mix></WinBtn>
          <WinBtn $w={113} $ml={23}><Mix>在CAD中绘制截面图</Mix></WinBtn>
          <WinBtn $w={72} $ml={25} $focus>确定</WinBtn>
          <WinBtn $w={72} $ml={15}>取消</WinBtn>
        </ActionRow>
        <PolyStatus>
          <PolyCell $w={147}><Mix>坐标 (X: -303 Y: 721)</Mix></PolyCell>
          <PolyCell $w={147}><Mix>命令: 无</Mix></PolyCell>
          <PolyCell>偏移成功</PolyCell>
          <ResizeGrip/>
        </PolyStatus>
      </PolyWin>

      <GridDlg>
        <DlgTitle>定义网格<X size={15} strokeWidth={1.200}/></DlgTitle>
        <DlgBody>
          <Group>
            <Legend><Mix>水平方向间距(mm)=&gt;间距*个数,间距,间距*个数,间距,...</Mix></Legend>
            <Area><Selected>50, 150, 150, 650, 200</Selected></Area>
          </Group>
          <Group>
            <Legend><Mix>垂直方向间距(mm)=&gt;间距*个数,间距,间距*个数,间距,...</Mix></Legend>
            <Area>250, 100, 100, 100, 150</Area>
          </Group>
          <DlgActions>
            <WinBtn $w={72} $ml={0}>确定</WinBtn>
            <WinBtn $w={72} $ml={0}>取消</WinBtn>
          </DlgActions>
        </DlgBody>
      </GridDlg>

      <RedFrame $x={280} $y={83} $w={142} $h={47}/>
      <RedFrame $x={-3} $y={179} $w={113} $h={52}/>
      <Badge>70</Badge>
      <ImeBar>
        <ImeGap $ml={0}><SogouIc s={21}/></ImeGap>
        <ImeZh>英</ImeZh>
        <ImeGap $ml={8}>°,</ImeGap>
        <ImeGap $ml={9}><Smile size={16}/></ImeGap>
        <ImeGap $ml={5}><Mic size={15} strokeWidth={2.500}/></ImeGap>
        <ImeGap $ml={6}><Keyboard size={17} strokeWidth={2.200}/></ImeGap>
        <ImeGap $ml={7}><AvatarSmall/></ImeGap>
        <ImeGap $ml={2}><Shirt size={15} fill="#1f7fd0"/></ImeGap>
        <ImeGap $ml={7}><Wrench size={15} fill="#1f7fd0"/></ImeGap>
      </ImeBar>
    </Shell>
  );
}
